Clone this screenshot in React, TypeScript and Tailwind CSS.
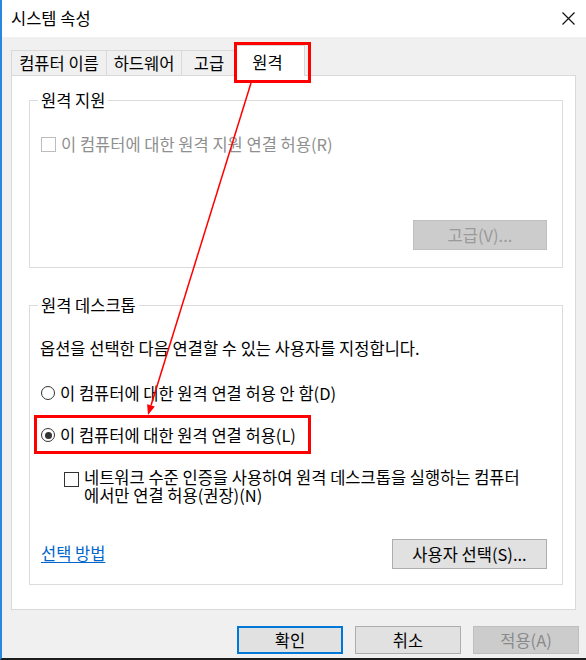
import React from "react";

function CheckBox({ disabled }: { disabled?: boolean }) {
  return (
    <span
      className={
        "inline-block w-[15px] h-[15px] shrink-0 bg-white border " +
        (disabled ? "border-[#bcbcbc]" : "border-[#333333]")
      }
    />
  );
}

function Radio({ checked }: { checked?: boolean }) {
  return (
    <span className="w-[14px] h-[14px] shrink-0 rounded-full border border-[#333333] bg-white flex items-center justify-center">
      {checked && <span className="w-[7px] h-[7px] rounded-full bg-[#333333]" />}
    </span>
  );
}

function Group({ title, height, children }: { title: string; height: string; children: React.ReactNode }) {
  return (
    <fieldset className={"w-[534px] ml-[17px] border border-[#dcdcdc] " + height}>
      <legend className="ml-[8px] px-[3px] leading-[20px] text-black">{title}</legend>
      {children}
    </fieldset>
  );
}

export default function App() {
  return (
    <div className="relative w-[586px] h-[660px] bg-[#f0f0f0] border-l-2 border-l-[#2b86dd] border-b-2 border-b-[#1c1c1c] flex flex-col overflow-hidden text-[16.5px] text-black font-['Noto_Sans_CJK_KR','Liberation_Sans',sans-serif]">
      {/* title bar */}
      <div className="h-[37px] shrink-0 bg-white flex items-center justify-between pl-[9px] pr-[11px]">
        <span className="leading-none">시스템 속성</span>
        <svg width="13" height="13" viewBox="0 0 13 13" className="mt-[-1px]">
          <path d="M0.5 0.5 L12.5 12.5 M12.5 0.5 L0.5 12.5" stroke="#111" strokeWidth="1.2" />
        </svg>
      </div>

      {/* tabs */}
      <div className="mt-[8px] ml-[9px] flex items-end -mb-px relative z-10">
        <div className="w-[96px] h-[25px] mb-px flex items-center justify-center border border-b-0 border-[#d9d9d9] bg-[#f0f0f0]">
          컴퓨터 이름
        </div>
        <div className="w-[75px] h-[25px] mb-px flex items-center justify-center border-t border-r border-[#d9d9d9] bg-[#f0f0f0]">
          하드웨어
        </div>
        <div className="w-[54px] h-[25px] mb-px flex items-center justify-center border-t border-[#d9d9d9] bg-[#f0f0f0]">
          고급
        </div>
        <div className="w-[69px] h-[31px] flex items-center justify-center pt-[3px] pr-[6px] border border-b-0 border-[#d9d9d9] bg-white">
          원격
        </div>
      </div>

      {/* panel */}
      <div className="ml-[9px] w-[565px] h-[535px] shrink-0 bg-white border border-[#d9d9d9] pt-[14px]">
        <Group title="원격 지원" height="h-[178px]">
          <div className="flex flex-col">
            <div className="mt-[24px] h-[20px] pl-[11px] flex items-center gap-[5px] text-[#8f8f8f]">
              <CheckBox disabled />
              <span>이 컴퓨터에 대한 원격 지원 연결 허용(R)</span>
            </div>
            <button className="self-end mt-[66px] mr-[15px] w-[134px] h-[30px] bg-[#cccccc] border border-[#bfbfbf] text-[#9a9a9a]">
              고급(V)...
            </button>
          </div>
        </Group>

        <div className="h-[27px]" />

        <Group title="원격 데스크톱" height="h-[290px]">
          <div className="flex flex-col">
            <div className="mt-[23px] h-[20px] pl-[10px] flex items-center">
              옵션을 선택한 다음 연결할 수 있는 사용자를 지정합니다.
            </div>
            <div className="mt-[25px] h-[20px] pl-[11px] flex items-center gap-[5px]">
              <Radio />
              <span>이 컴퓨터에 대한 원격 연결 허용 안 함(D)</span>
            </div>
            <div className="mt-[22px] h-[20px] pl-[11px] flex items-center gap-[5px]">
              <Radio checked />
              <span>이 컴퓨터에 대한 원격 연결 허용(L)</span>
            </div>
            <div className="mt-[23px] pl-[34px] flex items-start gap-[5px] leading-[18px]">
              <span className="mt-[3px]">
                <CheckBox />
              </span>
              <span>
                네트워크 수준 인증을 사용하여 원격 데스크톱을 실행하는 컴퓨터
                <br />
                에서만 연결 허용(권장)(N)
              </span>
            </div>
            <div className="mt-[35px] pl-[11px] pr-[15px] flex items-center justify-between">
              <a className="text-[#0066cc] underline underline-offset-2 -mt-[2px]">선택 방법</a>
              <button className="w-[155px] h-[30px] bg-[#e1e1e1] border border-[#adadad]">사용자 선택(S)...</button>
            </div>
          </div>
        </Group>
      </div>

      {/* dialog buttons */}
      <div className="mt-[16px] pr-[7px] flex justify-end gap-[12px]">
        <button className="w-[106px] h-[28px] bg-[#e1e1e1] border-2 border-[#0078d7]">확인</button>
        <button className="w-[106px] h-[28px] bg-[#e1e1e1] border border-[#adadad]">취소</button>
        <button className="w-[106px] h-[28px] bg-[#cccccc] border border-[#bfbfbf] text-[#8a8a8a]">적용(A)</button>
      </div>

      {/* red annotations */}
      <svg className="absolute left-[-2px] top-0 pointer-events-none z-20" width="586" height="660" viewBox="0 0 586 660">
        <rect x="235.5" y="43.5" width="74" height="38" fill="none" stroke="#ff0000" strokeWidth="3" />
        <rect x="35.5" y="416.5" width="274" height="36" fill="none" stroke="#ff0000" strokeWidth="3" />
        <line x1="251" y1="83" x2="151" y2="405.5" stroke="#ff0000" strokeWidth="1.5" />
        <polygon points="148,415 154.8,406.6 147.1,404.3" fill="#ff0000" />
      </svg>
    </div>
  );
}
